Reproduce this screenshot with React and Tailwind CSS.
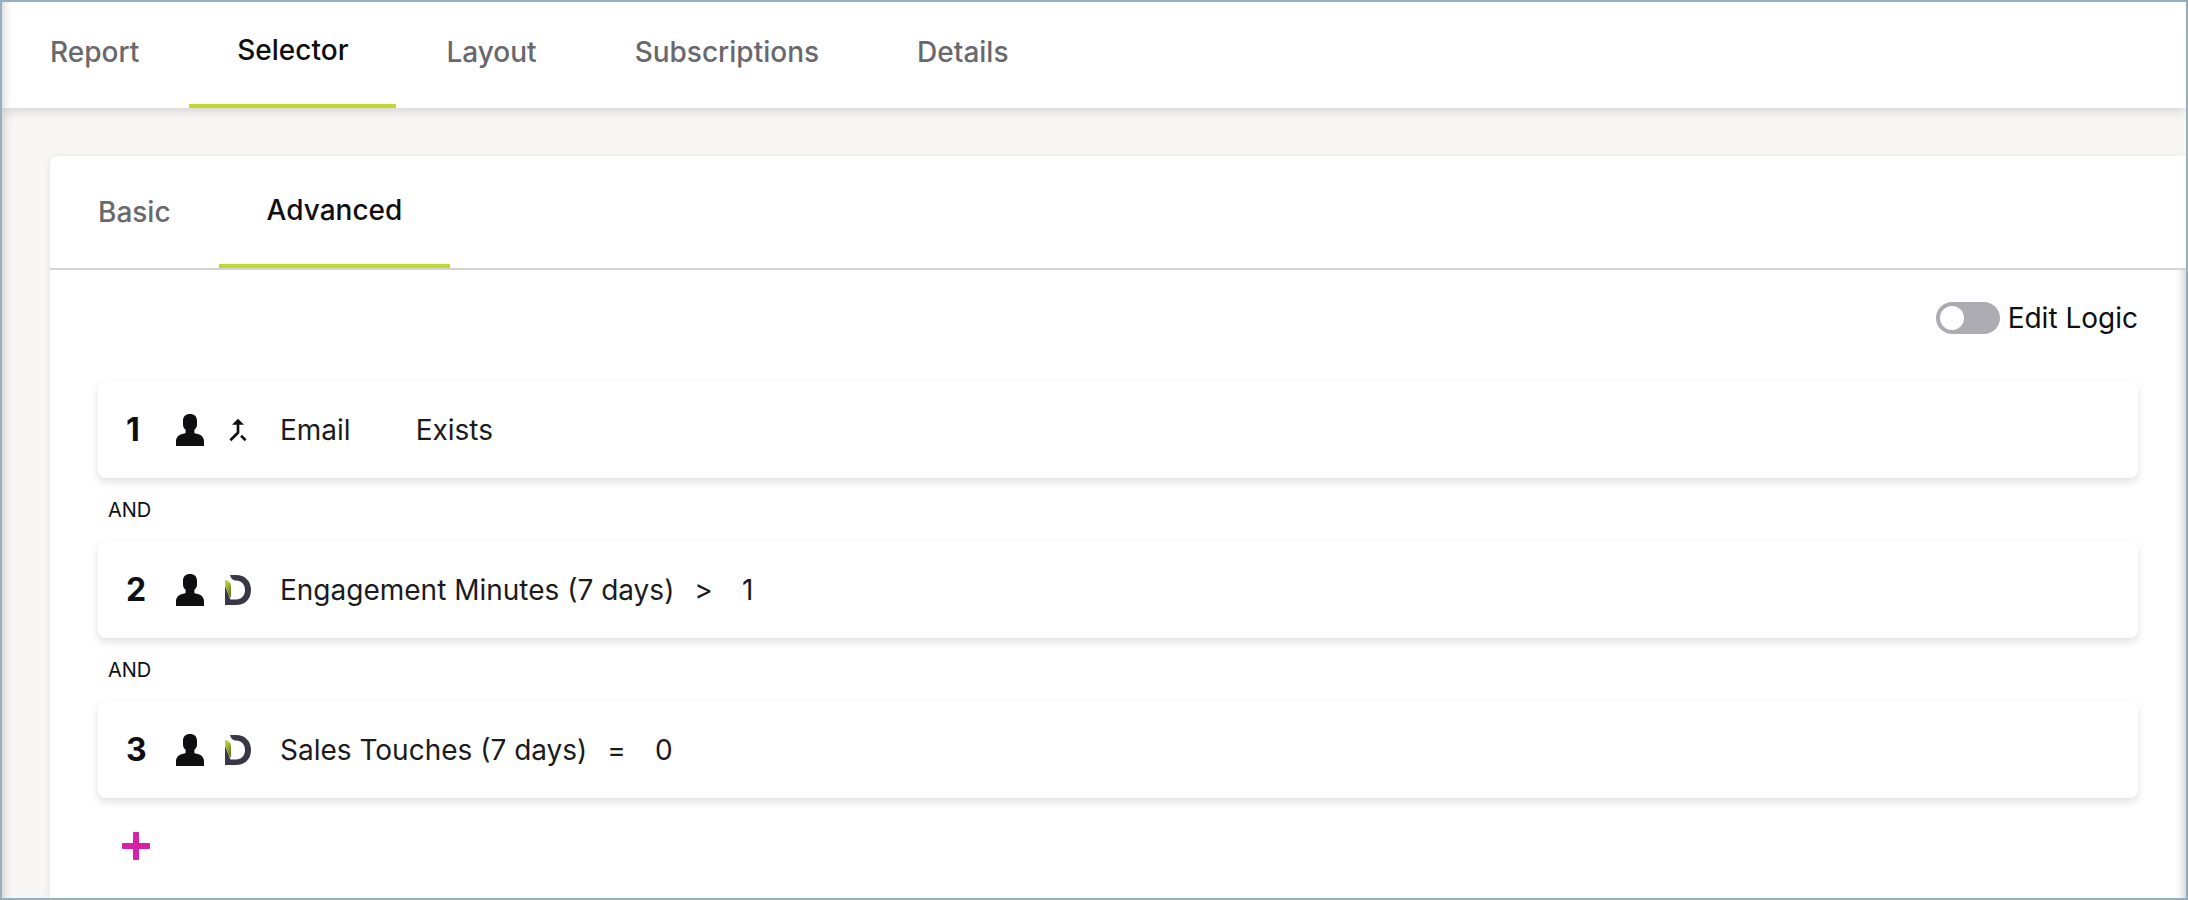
import React, { useState } from 'react';
import clsx from 'clsx';

const pageTabs = ['Report', 'Selector', 'Layout', 'Subscriptions', 'Details'];
const selectorTabs = ['Basic', 'Advanced'];

const rules = [
	{ id: 1, source: 'merge', field: 'Email', operator: '', value: 'Exists' },
	{
		id: 2,
		source: 'brand',
		field: 'Engagement Minutes (7 days)',
		operator: '>',
		value: '1',
	},
	{
		id: 3,
		source: 'brand',
		field: 'Sales Touches (7 days)',
		operator: '=',
		value: '0',
	},
];

function PersonIcon() {
	return (
		<svg viewBox="0 0 28 32" className="h-8 w-7" fill="#0f0f11">
			<path d="M14 0C9.600 0 7 2.600 7 6.600V10.500C7 12.800 8 14.700 9.600 15.800V18.200C9.600 19 9 19.400 8 19.600C3 20.500 0 23 0 27.500V32H28V27.500C28 23 25 20.500 20 19.600C19 19.400 18.400 19 18.400 18.200V15.800C20 14.700 21 12.800 21 10.500V6.600C21 2.600 18.400 0 14 0Z" />
		</svg>
	);
}

function MergeIcon() {
	return (
		<svg viewBox="0 0 24 24" className="h-8 w-8" fill="#0f0f11">
			<path d="M17 20.410L18.410 19L15 15.590L13.590 17L17 20.410ZM7.500 8H11V13.590L5.590 19L7 20.410L13 14.410V8H16.500L12 3.500L7.500 8Z" />
		</svg>
	);
}

function BrandIcon() {
	return (
		<svg viewBox="0 0 26 30" className="h-[30px] w-[26px]">
			<defs>
				<linearGradient id="leaf" x1="0" y1="0" x2="0.4" y2="1">
					<stop offset="0.2" stopColor="#b9d532" />
					<stop offset="1" stopColor="#66782e" />
				</linearGradient>
			</defs>
			<path
				d="M5 0H11C20 0 26 6 26 15S20 30 11 30H0V11L5.500 24.500H11C16.500 24.500 20 20.500 20 15S16.500 5.500 11 5.500C8 5.500 5.600 3.500 5 0Z"
				fill="#373846"
			/>
			<path d="M0 5C3.500 5.500 6 8 6 11V22L5 22.500L0 11Z" fill="url(#leaf)" />
		</svg>
	);
}

function Tabs({ label, tabs, active, onChange, className, tabClassName }) {
	return (
		<div
			role="tablist"
			aria-label={label}
			className={clsx('flex', className)}
		>
			{tabs.map((tab) => (
				<button
					key={tab}
					type="button"
					role="tab"
					aria-selected={tab === active}
					onClick={() => onChange(tab)}
					className={clsx(
						'px-12 font-medium text-[28px] leading-8',
						tabClassName,
						tab === active
							? 'border-b-4 border-[#bfd930] text-[#0f0f11]'
							: 'text-[#68686d]'
					)}
				>
					{tab}
				</button>
			))}
		</div>
	);
}

function Rule({ rule }) {
	return (
		<div className="flex h-24 items-center rounded-lg bg-white px-7 text-[28px] text-[#1b1b1d] shadow-[0_4px_8px_rgba(0,0,0,0.12)]">
			<span className="w-[50px] text-[32px] font-bold text-[#0f0f11]">
				{rule.id}
			</span>
			<PersonIcon />
			<span className="ml-4 mr-6 flex w-9 justify-center">
				{rule.source === 'merge' ? <MergeIcon /> : <BrandIcon />}
			</span>
			<span>{rule.field}</span>
			<span className="ml-5 mr-[29px] min-w-4">{rule.operator}</span>
			<span>{rule.value}</span>
		</div>
	);
}

export default function App() {
	const [page, setPage] = useState('Selector');
	const [mode, setMode] = useState('Advanced');
	const [editLogic, setEditLogic] = useState(false);

	return (
		<div className="relative flex min-h-screen flex-col overflow-hidden border-2 border-[#94b0be] bg-[#f9f7f6] font-['Inter',sans-serif] text-[#0f0f11]">
			<header className="z-10 flex h-[106px] bg-white shadow-[0_2px_12px_rgba(40,30,50,0.2)]">
				<Tabs
					label="Report sections"
					tabs={pageTabs}
					active={page}
					onChange={setPage}
					className="gap-0.5"
					tabClassName="pb-1.5"
				/>
			</header>
			<main className="ml-12 mt-12 flex grow flex-col rounded-tl-lg bg-white shadow-[0_2px_8px_rgba(0,0,0,0.1)]">
				<div className="flex h-[114px] border-b-2 border-[#d4d4d4]">
					<Tabs
						label="Selector mode"
						tabs={selectorTabs}
						active={mode}
						onChange={setMode}
					/>
				</div>
				<div className="relative grow px-12 pt-4">
					<div className="flex h-16 items-center justify-end">
						<label className="flex cursor-pointer items-center gap-2 text-[28px]">
							<input
								type="checkbox"
								role="switch"
								checked={editLogic}
								onChange={(e) => setEditLogic(e.target.checked)}
								className="h-8 w-16 appearance-none rounded-full bg-[#acacb2] p-1 before:block before:size-6 before:rounded-full before:bg-white checked:bg-[#bfd930] checked:before:ml-8"
							/>
							Edit Logic
						</label>
					</div>
					<div className="mt-8">
						{rules.map((rule, index) => (
							<React.Fragment key={rule.id}>
								{index > 0 && (
									<div className="flex h-16 items-center pl-2.5 text-xl">
										AND
									</div>
								)}
								<Rule rule={rule} />
							</React.Fragment>
						))}
					</div>
					<button
						type="button"
						aria-label="Add rule"
						className="ml-6 mt-[34px] block"
					>
						<svg viewBox="0 0 28 28" className="size-7" fill="#d622a4">
							<rect x="11" width="6" height="28" rx="1" />
							<rect y="11" width="28" height="6" rx="1" />
						</svg>
					</button>
					<div className="pointer-events-none absolute inset-0 shadow-[inset_-12px_0_12px_-12px_rgba(0,0,0,0.3)]" />
				</div>
			</main>
			<div className="pointer-events-none absolute inset-0 z-20 shadow-[inset_12px_0_12px_-12px_rgba(0,0,0,0.24)]" />
		</div>
	);
}
